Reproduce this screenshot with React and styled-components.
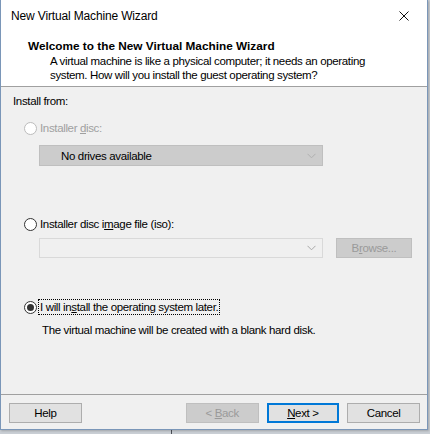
import React from "react";
import styled, { createGlobalStyle, css } from "styled-components";

const GlobalStyle = createGlobalStyle`
  html, body {
    margin: 0;
    padding: 0;
    background: #c9ced4;
  }
  body {
    font-family: "Liberation Sans", Arial, sans-serif;
    font-size: 11.5px;
    letter-spacing: -0.35px;
    color: #000;
  }
`;

const Desk = styled.div`
  width: 430px;
  height: 434px;
  display: flex;
  align-items: flex-start;
  background: linear-gradient(to right, #c9ced4 171px, #4a4f57 171px, #4a4f57 172px, #c9ced4 172px);
`;

const Window = styled.div`
  width: 426px;
  height: 429px;
  border: 1px solid #7a96b8;
  border-top: none;
  background: #f0f0f0;
  display: flex;
  flex-direction: column;
  box-shadow: 1px 1px 2px rgba(0, 0, 0, 0.2);
`;

const TitleBar = styled.div`
  height: 32px;
  background: #fff;
  display: flex;
  align-items: center;
  justify-content: space-between;
  padding: 0 0 0 10px;
  font-size: 12px;
  letter-spacing: -0.15px;
`;

const CloseBox = styled.div`
  width: 46px;
  height: 32px;
  display: flex;
  align-items: center;
  justify-content: center;
`;

const Header = styled.div`
  height: 55px;
  background: #fff;
  border-bottom: 1px solid #a0a0a0;
  padding: 7px 0 0 27px;
  box-sizing: border-box;
`;

const HeaderTitle = styled.div`
  font-weight: 700;
  font-size: 11.8px;
  letter-spacing: 0;
  line-height: 15px;
  margin-bottom: 1px;
`;

const HeaderText = styled.div`
  padding-left: 22px;
  line-height: 13.5px;
`;

const Body = styled.div`
  flex: 1;
  padding: 7px 0 0 12px;
  display: flex;
  flex-direction: column;
  align-items: flex-start;
`;

const Label = styled.div`
  line-height: 15px;
  margin-top: ${(p) => p.$top || 0}px;
  margin-left: ${(p) => p.$left || 0}px;
  color: ${(p) => (p.$disabled ? "#a0a0a0" : "#000")};
`;

const RadioRow = styled.label`
  display: flex;
  align-items: center;
  height: 16px;
  margin-top: ${(p) => p.$top}px;
  margin-left: 11px;
  color: ${(p) => (p.$disabled ? "#a0a0a0" : "#000")};
`;

const Circle = styled.span`
  width: 13px;
  height: 13px;
  box-sizing: border-box;
  border-radius: 50%;
  border: 1px solid ${(p) => (p.$disabled ? "#bcbcbc" : "#333")};
  background: #fff;
  margin-right: 2px;
  display: flex;
  align-items: center;
  justify-content: center;
  &::after {
    content: "";
    width: 7px;
    height: 7px;
    border-radius: 50%;
    background: #333;
    display: ${(p) => (p.$checked ? "block" : "none")};
  }
`;

const RadioText = styled.span`
  line-height: 14px;
  padding: 0 1px;
  ${(p) =>
    p.$focus &&
    css`
      outline: 1px dotted #000;
      outline-offset: 0;
    `}
`;

const Select = styled.div`
  margin: ${(p) => p.$top}px 0 0 26px;
  width: 284px;
  height: ${(p) => p.$h}px;
  box-sizing: border-box;
  border: 1px solid ${(p) => (p.$filled ? "#bfbfbf" : "#d9d9d9")};
  background: ${(p) => (p.$filled ? "#cccccc" : "#f0f0f0")};
  display: flex;
  align-items: center;
  justify-content: space-between;
  padding: 0 6px 0 21px;
`;

const FieldRow = styled.div`
  display: flex;
  align-items: center;
  gap: 13px;
  margin-top: 6px;
`;

const Chevron = ({ color = "#a8a8a8" }) => (
  <svg width="9" height="6" viewBox="0 0 9 6">
    <path d="M0.5 0.8 L4.5 4.8 L8.5 0.8" fill="none" stroke={color} strokeWidth="1" />
  </svg>
);

const Footer = styled.div`
  border-top: 1px solid #a0a0a0;
  height: 35px;
  flex-shrink: 0;
  box-sizing: border-box;
  display: flex;
  align-items: flex-start;
  padding: 8px 7px 0 8px;
`;

const Button = styled.button`
  font: inherit;
  letter-spacing: inherit;
  width: ${(p) => p.$w || 73}px;
  height: 20px;
  box-sizing: border-box;
  padding: 0;
  margin-left: ${(p) => p.$gap || 0}px;
  background: ${(p) => (p.$disabled ? "#cccccc" : "#e1e1e1")};
  border: 1px solid ${(p) => (p.$primary ? "#0078d7" : p.$disabled ? "#bfbfbf" : "#adadad")};
  box-shadow: ${(p) => (p.$primary ? "inset 0 0 0 1px #0078d7" : "none")};
  color: ${(p) => (p.$disabled ? "#9a9a9a" : "#000")};
  cursor: default;
`;

const U = styled.span`
  text-decoration: underline;
`;

export default function App() {
  return (
    <>
      <GlobalStyle />
      <Desk>
        <Window>
          <TitleBar>
            <span>New Virtual Machine Wizard</span>
            <CloseBox>
              <svg width="10" height="10" viewBox="0 0 10 10">
                <path d="M0.5 0.5 L9.5 9.5 M9.5 0.5 L0.5 9.5" stroke="#111" strokeWidth="1" />
              </svg>
            </CloseBox>
          </TitleBar>
          <Header>
            <HeaderTitle>Welcome to the New Virtual Machine Wizard</HeaderTitle>
            <HeaderText>
              A virtual machine is like a physical computer; it needs an operating
              <br />
              system. How will you install the guest operating system?
            </HeaderText>
          </Header>
          <Body>
            <Label>Install from:</Label>

            <RadioRow $top={11} $disabled>
              <Circle $disabled />
              <RadioText>
                Installer <U>d</U>isc:
              </RadioText>
            </RadioRow>
            <Select $top={9} $h={21} $filled>
              <span>No drives available</span>
              <Chevron color="#b0b0b0" />
            </Select>

            <RadioRow $top={50}>
              <Circle />
              <RadioText>
                Installer disc i<U>m</U>age file (iso):
              </RadioText>
            </RadioRow>
            <FieldRow>
              <Select $top={0} $h={20}>
                <span />
                <Chevron />
              </Select>
              <Button $w={76} $disabled>
                B<U>r</U>owse...
              </Button>
            </FieldRow>

            <RadioRow $top={41}>
              <Circle $checked />
              <RadioText $focus>
                I will in<U>s</U>tall the operating system later.
              </RadioText>
            </RadioRow>
            <Label $top={8} $left={29}>
              The virtual machine will be created with a blank hard disk.
            </Label>
          </Body>
          <Footer>
            <Button>Help</Button>
            <Button $gap={104} $disabled>
              &lt; <U>B</U>ack
            </Button>
            <Button $gap={8} $primary>
              <U>N</U>ext &gt;
            </Button>
            <Button $gap={8}>Cancel</Button>
          </Footer>
        </Window>
      </Desk>
    </>
  );
}
